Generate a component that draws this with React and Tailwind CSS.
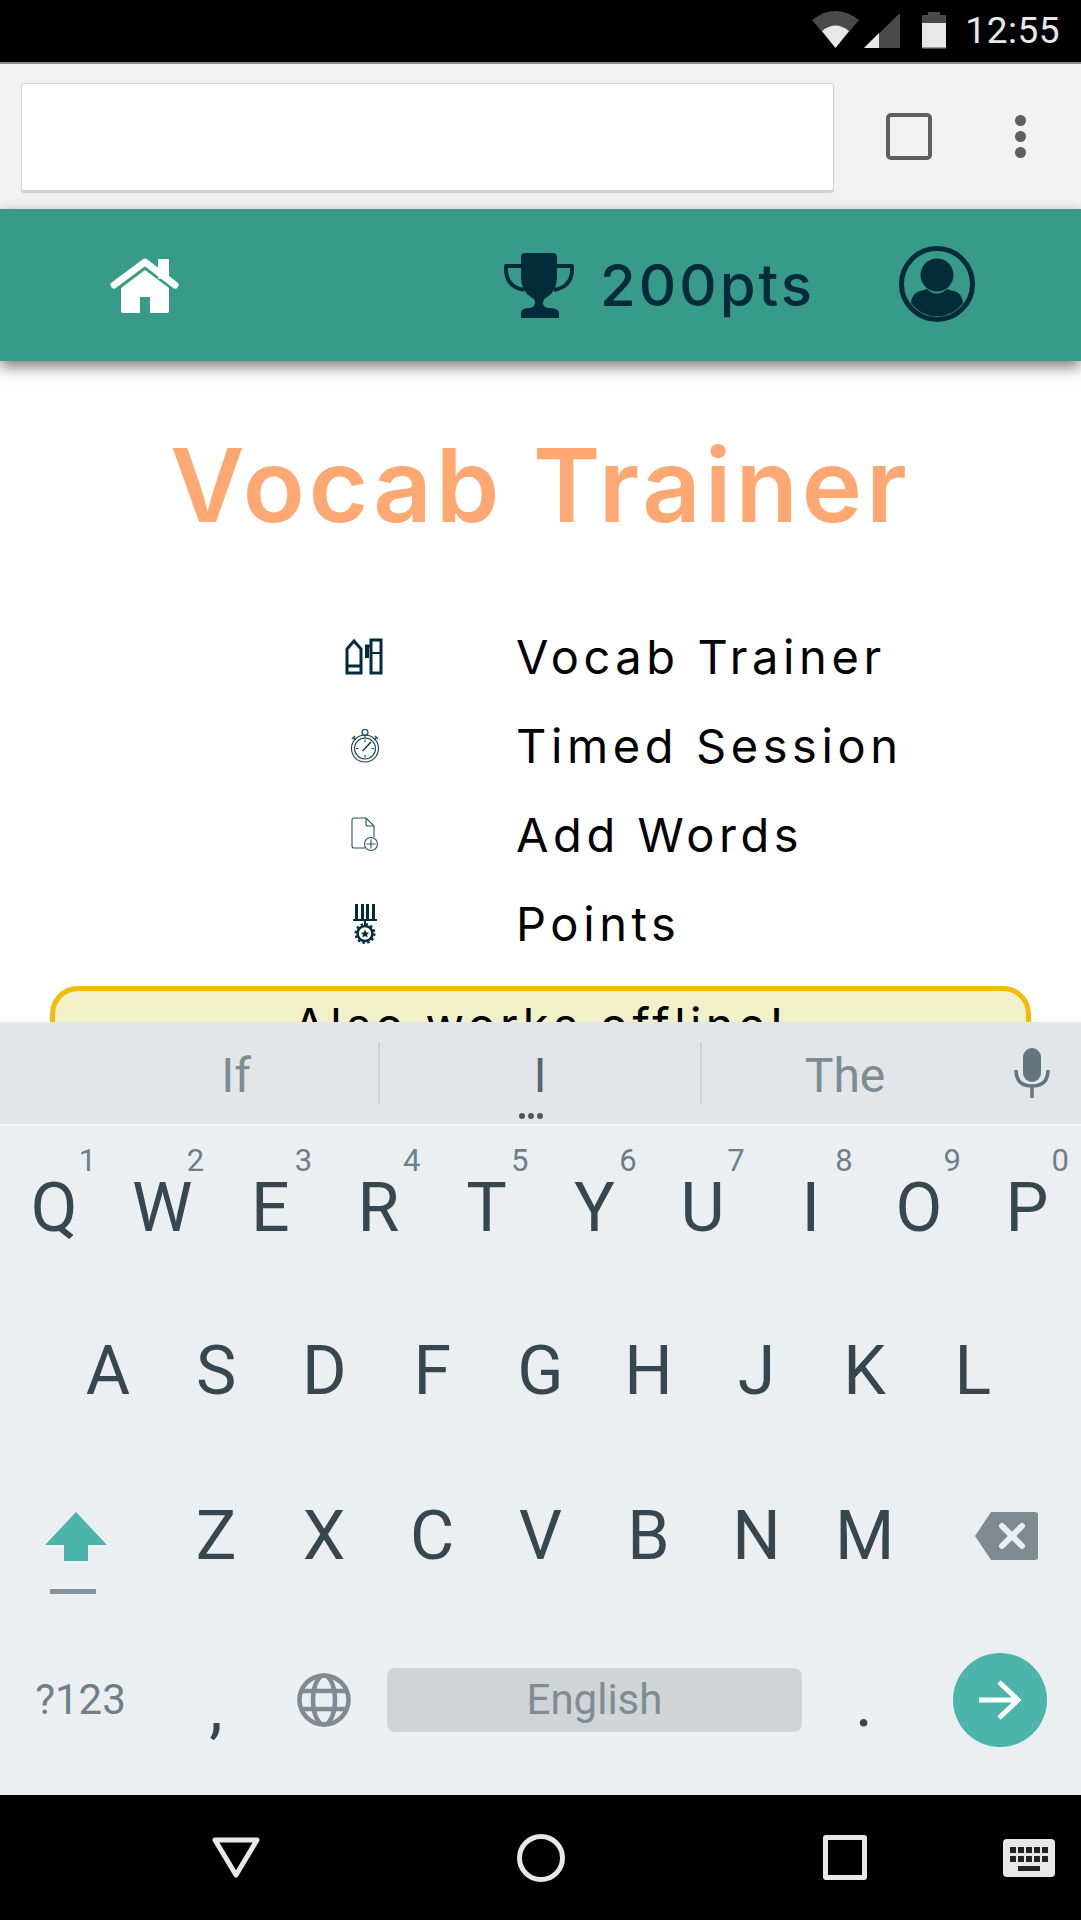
const ROW_1 = [
  ["Q", "1"],
  ["W", "2"],
  ["E", "3"],
  ["R", "4"],
  ["T", "5"],
  ["Y", "6"],
  ["U", "7"],
  ["I", "8"],
  ["O", "9"],
  ["P", "0"],
];
const ROW_2 = ["A", "S", "D", "F", "G", "H", "J", "K", "L"];
const ROW_3 = ["Z", "X", "C", "V", "B", "N", "M"];

function HomeIcon() {
  return (
    <svg width="69" height="55" viewBox="0 0 69 55" fill="#fff">
      <rect x="48" y="1" width="11" height="20" rx="1" />
      <path d="M4 27 L35 4 L65 27" fill="none" stroke="#fff" strokeWidth="7" strokeLinecap="round" strokeLinejoin="round" />
      <path d="M35 12 L59 30 V53 Q59 55 57 55 H40 V39 H30 V55 H13 Q11 55 11 53 V30 Z" />
    </svg>
  );
}

function TrophyIcon() {
  return (
    <svg width="70" height="65" viewBox="0 0 70 65" fill="#032b3a">
      <path d="M21 0 H49 Q53 0 53 4 V24 Q53 38 43 44 Q39 46 39 50 Q39 54 44 55 Q55 55 55 60 V65 H17 V60 Q17 55 26 55 Q31 54 31 50 Q31 46 27 44 Q17 38 17 24 V4 Q17 0 21 0Z" />
      <path d="M17 13 H2 V18 Q3 34 20 37" fill="none" stroke="#032b3a" strokeWidth="4" strokeLinejoin="round" />
      <path d="M53 13 H68 V18 Q67 34 50 37" fill="none" stroke="#032b3a" strokeWidth="4" strokeLinejoin="round" />
    </svg>
  );
}

function UserIcon() {
  return (
    <svg width="76" height="76" viewBox="0 0 76 76" fill="#032b3a">
      <circle cx="38" cy="38" r="35.5" fill="none" stroke="#032b3a" strokeWidth="5" />
      <circle cx="38" cy="29" r="16.5" />
      <path d="M12 57 Q13 47 21 45 Q26 44 28 43 Q38 52 48 43 Q50 44 55 45 Q63 47 64 57 A32 32 0 0 1 12 57Z" />
    </svg>
  );
}

function BooksIcon() {
  return (
    <svg width="38" height="37" viewBox="0 0 38 37" fill="none" stroke="#032b3a" strokeWidth="3" className="mr-[3px]">
      <path d="M2 35 V11 L9 3 L16 11 V35 Z" />
      <path d="M2 28 H16" />
      <rect x="26" y="2" width="10" height="33" />
      <path d="M26 15 H36" strokeWidth="2" />
      <path d="M22 7 V20" strokeWidth="4" />
      <path d="M20 8 H26" strokeWidth="3" />
    </svg>
  );
}

function StopwatchIcon() {
  return (
    <svg width="30" height="34" viewBox="0 0 30 34" fill="none" stroke="#184455" strokeWidth="1.1">
      <circle cx="15" cy="19.5" r="13.5" />
      <circle cx="15" cy="19.5" r="10.5" />
      <circle cx="15" cy="3.5" r="3" />
      <path d="M15 6 V9 M3 8 L6 11 M2 10 L5 7 M27 8 L24 11 M28 10 L25 7" />
      <path d="M15 10.5 V13 M15 26 V28.5 M6 19.5 H8.5 M21.5 19.5 H24" />
      <path d="M14 20.5 L21 13 M14 20.5 L12.5 22" strokeWidth="1.6" />
    </svg>
  );
}

function AddFileIcon() {
  return (
    <svg width="28" height="35" viewBox="0 0 28 35" fill="none" stroke="#2a5263" strokeWidth="1.1">
      <path d="M14 31 H3 Q1 31 1 29 V3 Q1 1 3 1 H15 L23 9 V20" />
      <path d="M15 1 V7 Q15 9 17 9 H23" />
      <circle cx="20" cy="27" r="6.5" />
      <path d="M20 22.5 V31.5 M15.5 27 H24.5" />
    </svg>
  );
}

function MedalIcon() {
  return (
    <svg width="24" height="40" viewBox="0 0 24 40" fill="#032b3a">
      <rect x="2" y="0" width="3" height="15" />
      <rect x="8" y="0" width="3" height="15" />
      <rect x="13" y="0" width="3" height="15" />
      <rect x="19" y="0" width="3" height="15" />
      <rect x="0" y="15" width="24" height="2" />
      <rect x="11" y="17" width="2" height="4" />
      <circle cx="12" cy="29.5" r="7.5" fill="none" stroke="#032b3a" strokeWidth="2.6" />
      <circle cx="12" cy="29.5" r="9.5" fill="none" stroke="#032b3a" strokeWidth="2" strokeDasharray="2.5 2.5" />
      <path d="M12 25.5 L13.3 28.4 L16 28.7 L14 30.7 L14.6 33.5 L12 32 L9.4 33.5 L10 30.7 L8 28.7 L10.7 28.4 Z" />
    </svg>
  );
}

const MENU = [
  { label: "Vocab Trainer", icon: <BooksIcon /> },
  { label: "Timed Session", icon: <StopwatchIcon /> },
  { label: "Add Words", icon: <AddFileIcon /> },
  { label: "Points", icon: <MedalIcon /> },
];

function LetterKey({ letter, digit }) {
  return (
    <div className="relative flex w-[108.1px] shrink-0 items-center justify-center">
      <span>{letter}</span>
      {digit && (
        <span className="absolute right-[12px] top-[19px] text-[31px] leading-none text-[#6f7f88]">
          {digit}
        </span>
      )}
    </div>
  );
}

export default function App() {
  return (
    <div className="flex h-[1920px] w-[1081px] flex-col overflow-hidden bg-white font-['Roboto',sans-serif]">
      {/* android status bar */}
      <div className="flex h-[64px] shrink-0 items-center justify-end border-b-2 border-[#8a8a8a] bg-black pr-[21px] pb-[2px]">
        <svg width="47" height="37" viewBox="0 0 47 37" className="mb-[1px]">
          <path d="M0 9 Q23.5 -9 47 9 L23.5 37Z" fill="#4a4a4a" />
          <path d="M10 20 Q23.5 9 37 20 L23.5 37Z" fill="#e8e8e8" />
        </svg>
        <svg width="36" height="35" viewBox="0 0 36 35" className="ml-[5px]">
          <path d="M36 0 V35 H0Z" fill="#4a4a4a" />
          <path d="M15 20 V35 H0Z" fill="#e8e8e8" />
        </svg>
        <svg width="24" height="37" viewBox="0 0 24 37" className="ml-[22px]">
          <path d="M6 0 H18 V3 H24 V37 H0 V3 H6Z" fill="#4a4a4a" />
          <rect x="0" y="11" width="24" height="24.5" fill="#e8e8e8" />
        </svg>
        <span className="ml-[19px] text-[37px] leading-none tracking-[0.5px] text-[#e8e8e8]">12:55</span>
      </div>

      {/* browser toolbar */}
      <div className="flex h-[145px] shrink-0 items-center bg-[#f2f2f2] pl-[21px]">
        <div className="h-[108px] w-[813px] rounded-[3px] border border-[#d2d2d2] bg-white shadow-[0_2px_1px_#cfcfcf]" />
        <div className="ml-[52px] h-[47px] w-[46px] rounded-[5px] border-[4px] border-[#5f5f5f]" />
        <div className="ml-[83px] flex flex-col gap-[5px]">
          <div className="h-[11px] w-[11px] rounded-full bg-[#5f5f5f]" />
          <div className="h-[11px] w-[11px] rounded-full bg-[#5f5f5f]" />
          <div className="h-[11px] w-[11px] rounded-full bg-[#5f5f5f]" />
        </div>
      </div>

      {/* app header */}
      <div className="relative z-10 flex h-[152px] shrink-0 items-center bg-[#389b8a] pl-[110px] pr-[106px] shadow-[0_6px_14px_rgba(0,0,0,0.5)]">
        <HomeIcon />
        <div className="ml-auto flex items-center">
          <TrophyIcon />
          <span className="ml-[26px] font-['Inter',sans-serif] text-[58px] font-medium leading-none tracking-[3px] text-[#032b3a]">
            200pts
          </span>
        </div>
        <div className="mb-[2px] ml-[84px]">
          <UserIcon />
        </div>
      </div>

      {/* page content, cut off by the keyboard */}
      <div className="min-h-0 flex-1 overflow-hidden">
        <h1 className="mt-[62px] text-center font-['Inter',sans-serif] text-[102px] font-semibold leading-[124px] tracking-[4px] text-[#ffa873]">
          Vocab Trainer
        </h1>
        <ul className="mt-[65px]">
          {MENU.map((item) => (
            <li key={item.label} className="flex h-[89px] items-center">
              <div className="ml-[335px] flex w-[60px] justify-center">{item.icon}</div>
              <span className="ml-[121px] font-['Inter',sans-serif] text-[47px] leading-none tracking-[4.6px] text-black">
                {item.label}
              </span>
            </li>
          ))}
        </ul>
        <div className="mx-[50px] mt-[18px] h-[120px] rounded-[28px] border-[5px] border-[#f4bb0a] bg-[#f0f0c9] pt-[6px] text-center font-['Inter',sans-serif] text-[47px] leading-[56px] tracking-[4.4px] text-black">
          Also works offline!
        </div>
      </div>

      {/* keyboard */}
      <div className="h-[773px] shrink-0 bg-[#eceff2]">
        <div className="relative flex h-[104px] items-center border-b-2 border-[#f6f7f8] bg-[#e3e6e9] text-[48px] text-[#7d8b92]">
          <div className="flex w-[378px] justify-center pl-[94px] pt-[6px]">If</div>
          <div className="h-[63px] w-[2px] bg-[#cdd1d4]" />
          <div className="flex w-[320px] justify-center pt-[6px] text-[#55666f]">I</div>
          <div className="h-[63px] w-[2px] bg-[#cdd1d4]" />
          <div className="flex w-[286px] justify-center pt-[6px]">The</div>
          <svg width="36" height="50" viewBox="0 0 36 50" className="ml-[26px]" fill="#64757e">
            <rect x="9" y="0" width="18" height="34" rx="9" />
            <path d="M2 22 Q2 38 18 38 Q34 38 34 22 M18 38 V50" fill="none" stroke="#64757e" strokeWidth="3.5" />
          </svg>
          <div className="absolute bottom-[5px] left-[519px] flex gap-[3px]">
            <div className="h-[6px] w-[6px] rounded-full bg-[#4b5a62]" />
            <div className="h-[6px] w-[6px] rounded-full bg-[#4b5a62]" />
            <div className="h-[6px] w-[6px] rounded-full bg-[#4b5a62]" />
          </div>
        </div>

        <div className="text-[68px] leading-none text-[#37474f]">
          <div className="flex h-[164px]">
            {ROW_1.map(([letter, digit]) => (
              <LetterKey key={letter} letter={letter} digit={digit} />
            ))}
          </div>
          <div className="flex h-[161px] pl-[54px]">
            {ROW_2.map((letter) => (
              <LetterKey key={letter} letter={letter} />
            ))}
          </div>
          <div className="flex h-[170px]">
            <div className="relative flex w-[162px] shrink-0 items-center pl-[45px]">
              <svg width="62" height="49" viewBox="0 0 62 49" fill="#4cb5ab">
                <path d="M31 0 L62 33 H43 V49 H19 V33 H0Z" />
              </svg>
              <div className="absolute left-[50px] top-[138px] h-[5px] w-[46px] bg-[#87939a]" />
            </div>
            {ROW_3.map((letter) => (
              <LetterKey key={letter} letter={letter} />
            ))}
            <div className="flex flex-1 items-center pl-[56px]">
              <svg width="63" height="48" viewBox="0 0 63 48">
                <path d="M16 0 H60 Q63 0 63 3 V45 Q63 48 60 48 H16 L0 24Z" fill="#7f8b90" />
                <path d="M27 14 L47 34 M47 14 L27 34" stroke="#eceff2" strokeWidth="6" strokeLinecap="round" />
              </svg>
            </div>
          </div>
          <div className="flex h-[158px] items-center text-[42px] text-[#6f7f88]">
            <div className="flex w-[161px] shrink-0 justify-center">?123</div>
            <div className="flex w-[110px] shrink-0 justify-center pt-[14px] text-[68px] text-[#37474f]">,</div>
            <div className="flex w-[106px] shrink-0 justify-center">
              <svg width="54" height="54" viewBox="0 0 54 54" fill="none" stroke="#7f8b90" strokeWidth="4.5">
                <circle cx="27" cy="27" r="24.5" />
                <ellipse cx="27" cy="27" rx="11" ry="24.5" />
                <path d="M4 18 H50 M4 36 H50" />
              </svg>
            </div>
            <div className="ml-[10px] flex h-[64px] w-[415px] shrink-0 items-center justify-center rounded-[8px] bg-[#d0d4d7] text-[#7f8c92]">
              English
            </div>
            <div className="flex w-[116px] shrink-0 justify-center pt-[6px] pl-[8px] text-[68px] text-[#37474f]">.</div>
            <div className="ml-[35px] flex h-[94px] w-[94px] shrink-0 items-center justify-center rounded-full bg-[#4cb5ab]">
              <svg width="44" height="40" viewBox="0 0 44 40" fill="none" stroke="#fff" strokeWidth="5">
                <path d="M1 20 H40 M21 2 L40 20 L21 38" />
              </svg>
            </div>
          </div>
        </div>
      </div>

      {/* android nav bar */}
      <div className="flex h-[125px] shrink-0 items-center bg-black pl-[212px]">
        <svg width="48" height="41" viewBox="0 0 48 41" fill="none" stroke="#e8e8e8" strokeWidth="5" strokeLinejoin="round">
          <path d="M3 3 H45 L24 38Z" />
        </svg>
        <div className="ml-[257px] h-[48px] w-[48px] rounded-full border-[5px] border-[#e8e8e8]" />
        <div className="ml-[258px] h-[45px] w-[44px] rounded-[3px] border-[5px] border-[#e8e8e8]" />
        <svg width="52" height="38" viewBox="0 0 52 38" className="ml-[136px]">
          <rect width="52" height="38" rx="4" fill="#e8e8e8" />
          <g fill="#222">
            <rect x="7" y="8" width="6" height="6" />
            <rect x="15" y="8" width="6" height="6" />
            <rect x="23" y="8" width="6" height="6" />
            <rect x="31" y="8" width="6" height="6" />
            <rect x="39" y="8" width="6" height="6" />
            <rect x="7" y="17" width="6" height="6" />
            <rect x="15" y="17" width="6" height="6" />
            <rect x="23" y="17" width="6" height="6" />
            <rect x="31" y="17" width="6" height="6" />
            <rect x="39" y="17" width="6" height="6" />
            <rect x="15" y="27" width="22" height="5" />
          </g>
        </svg>
      </div>
    </div>
  );
}
